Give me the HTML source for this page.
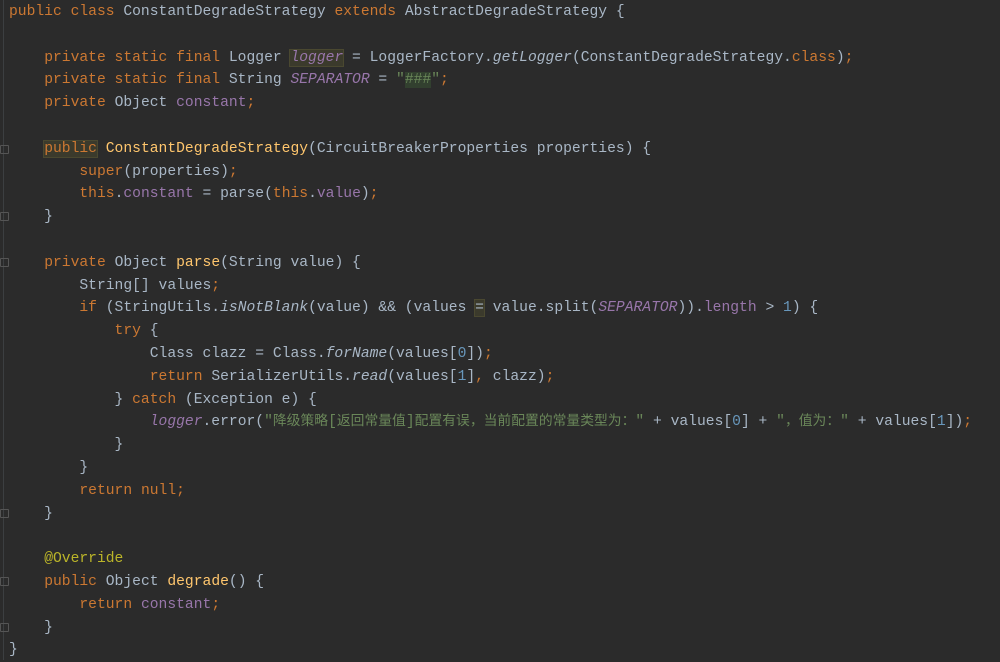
<!DOCTYPE html>
<html><head><meta charset="utf-8"><style>
html,body{margin:0;padding:0;background:#2b2b2b;width:1000px;height:660px;overflow:hidden}
#g{position:absolute;left:3px;top:0;width:1px;height:660px;background:#3c3f41}
.l{position:absolute;left:9px;white-space:pre;font-family:"Liberation Mono",monospace;font-size:14.67px;color:#a9b7c6;line-height:22.8px;height:22.8px}
.k{color:#cc7832}.p{color:#9876aa}.i{font-style:italic}.s{color:#6a8759}.n{color:#6897bb}.m{color:#ffc66d}.a{color:#bbb529}
.c{font-family:"Liberation Mono","Noto Sans CJK SC",monospace;font-size:13.8px}
.hl{background:#3b3a2c;outline:1px solid #4a4830}
.hg{background:#32402f}
.f{position:absolute;left:0;width:7px;height:7px;border:1px solid #555;border-radius:1px}
#w{position:absolute;left:0;top:1px;width:1000px;height:660px}
</style></head><body>
<div id="g"></div>
<div id="w">
<div class="f" style="top:144px"></div><div class="f" style="top:211px"></div>
<div class="f" style="top:257px"></div><div class="f" style="top:508px"></div>
<div class="f" style="top:576px"></div><div class="f" style="top:622px"></div>
<div class="l" style="top:0px"><span class="k">public class </span>ConstantDegradeStrategy <span class="k">extends </span>AbstractDegradeStrategy {</div>
<div class="l" style="top:45.6px">    <span class="k">private static final </span>Logger <span class="p i hl">logger</span> = LoggerFactory.<span class="i">getLogger</span>(ConstantDegradeStrategy.<span class="k">class</span>)<span class="k">;</span></div>
<div class="l" style="top:68.4px">    <span class="k">private static final </span>String <span class="p i">SEPARATOR</span> = <span class="s">"<span class="hg">###</span>"</span><span class="k">;</span></div>
<div class="l" style="top:91.2px">    <span class="k">private </span>Object <span class="p">constant</span><span class="k">;</span></div>
<div class="l" style="top:136.8px">    <span class="k hl">public</span> <span class="m">ConstantDegradeStrategy</span>(CircuitBreakerProperties properties) {</div>
<div class="l" style="top:159.6px">        <span class="k">super</span>(properties)<span class="k">;</span></div>
<div class="l" style="top:182.4px">        <span class="k">this</span>.<span class="p">constant </span>= parse(<span class="k">this</span>.<span class="p">value</span>)<span class="k">;</span></div>
<div class="l" style="top:205.2px">    }</div>
<div class="l" style="top:250.8px">    <span class="k">private </span>Object <span class="m">parse</span>(String value) {</div>
<div class="l" style="top:273.6px">        String[] values<span class="k">;</span></div>
<div class="l" style="top:296.4px">        <span class="k">if </span>(StringUtils.<span class="i">isNotBlank</span>(value) &amp;&amp; (values <span class="hl">=</span> value.split(<span class="p i">SEPARATOR</span>)).<span class="p">length </span>&gt; <span class="n">1</span>) {</div>
<div class="l" style="top:319.2px">            <span class="k">try </span>{</div>
<div class="l" style="top:342px">                Class clazz = Class.<span class="i">forName</span>(values[<span class="n">0</span>])<span class="k">;</span></div>
<div class="l" style="top:364.8px">                <span class="k">return </span>SerializerUtils.<span class="i">read</span>(values[<span class="n">1</span>]<span class="k">, </span>clazz)<span class="k">;</span></div>
<div class="l" style="top:387.6px">            } <span class="k">catch </span>(Exception e) {</div>
<div class="l" style="top:410.4px">                <span class="p i">logger</span>.error(<span class="s">"<span class="c">降级策略</span>[<span class="c">返回常量值</span>]<span class="c">配置有误，当前配置的常量类型为：</span>" </span>+ values[<span class="n">0</span>] + <span class="s">"<span class="c">，值为：</span>" </span>+ values[<span class="n">1</span>])<span class="k">;</span></div>
<div class="l" style="top:433.2px">            }</div>
<div class="l" style="top:456px">        }</div>
<div class="l" style="top:478.8px">        <span class="k">return null;</span></div>
<div class="l" style="top:501.6px">    }</div>
<div class="l" style="top:547.2px">    <span class="a">@Override</span></div>
<div class="l" style="top:570px">    <span class="k">public </span>Object <span class="m">degrade</span>() {</div>
<div class="l" style="top:592.8px">        <span class="k">return </span><span class="p">constant</span><span class="k">;</span></div>
<div class="l" style="top:615.6px">    }</div>
<div class="l" style="top:638.4px">}</div>
</div>
</body></html>
